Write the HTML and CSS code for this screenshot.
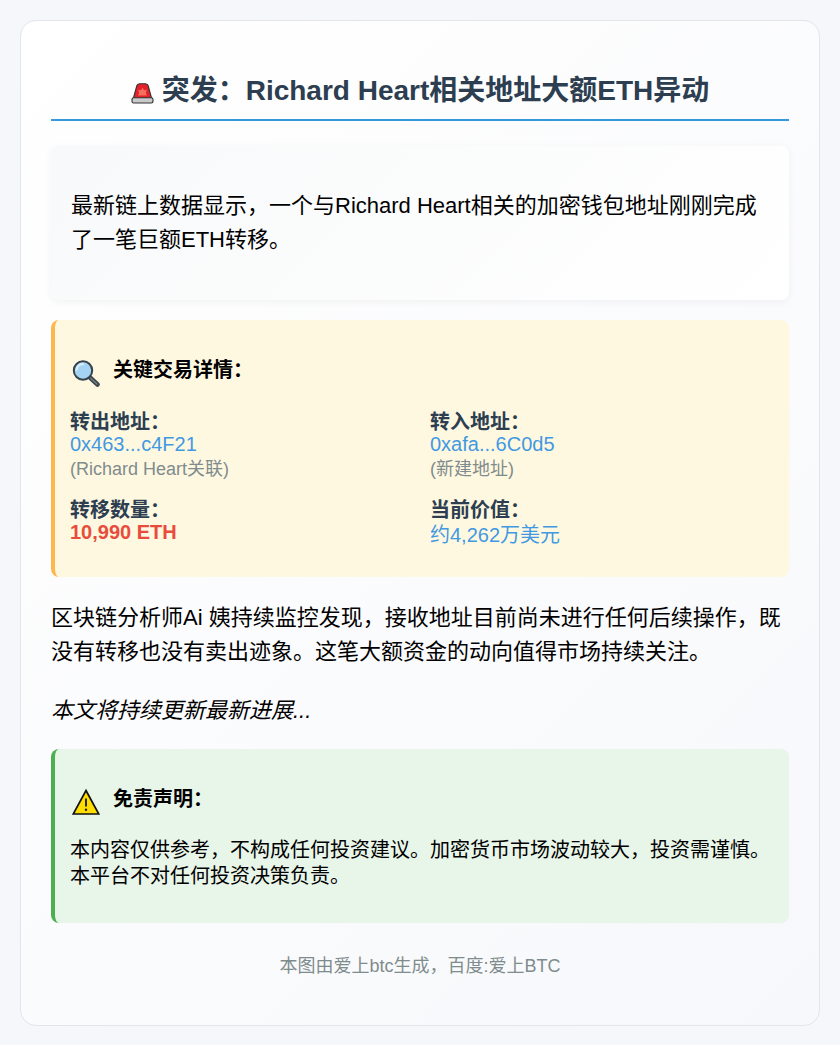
FILE: index.html
```html
<!DOCTYPE html>
<html lang="zh-CN">
<head>
<meta charset="utf-8">
<title>突发：Richard Heart相关地址大额ETH异动</title>
<link rel="stylesheet" href="styles.css">
</head>
<body>
<main class="card">
  <h1 class="title">
    <svg class="icon-siren" viewBox="0 0 24 22" aria-hidden="true">
      <path d="M6 3Q6.500 .8 9 .8h6q2.500 0 3 2.200L21.500 16h-19z" fill="#e3202c" stroke="#333" stroke-width="1.200"/>
      <path d="M12 5l1.600 2.500 2.900-.500-1 3 1 3H7.500l1-3-1-3 2.900.500z" fill="#f4705c"/>
      <rect x="1" y="15.500" width="22" height="5.500" rx="1.800" fill="#c9c9c9" stroke="#333" stroke-width="1.200"/>
    </svg>
    <span>突发：Richard Heart相关地址大额ETH异动</span>
  </h1>

  <section class="lede">
    <p>最新链上数据显示，一个与Richard Heart相关的加密钱包地址刚刚完成了一笔巨额ETH转移。</p>
  </section>

  <section class="panel panel-amber">
    <h2 class="panel-title">
      <svg class="icon" viewBox="0 0 28 28" aria-hidden="true">
        <path d="M18 18.500l7.500 7" stroke="#3a464c" stroke-width="4.500" stroke-linecap="round"/>
        <path d="M18.500 19l6.500 6" stroke="#75828a" stroke-width="1.300" stroke-linecap="round"/>
        <circle cx="11" cy="11.500" r="9.200" fill="#a5d3f3" stroke="#36434a" stroke-width="2"/>
        <path d="M4.500 10.500a6.500 6.500 0 0 1 6.500-5.500" stroke="#d7edfb" stroke-width="2.300" fill="none" stroke-linecap="round"/>
      </svg>
      <span>关键交易详情：</span>
    </h2>
    <div class="grid">
      <div class="item">
        <strong class="label">转出地址：</strong>
        <span class="value">0x463...c4F21</span>
        <span class="note">(Richard Heart关联)</span>
      </div>
      <div class="item">
        <strong class="label">转入地址：</strong>
        <span class="value">0xafa...6C0d5</span>
        <span class="note">(新建地址)</span>
      </div>
      <div class="item">
        <strong class="label">转移数量：</strong>
        <span class="value value-alert">10,990 ETH</span>
      </div>
      <div class="item">
        <strong class="label">当前价值：</strong>
        <span class="value value-cjk">约4,262万美元</span>
      </div>
    </div>
  </section>

  <p class="body-text">区块链分析师Ai 姨持续监控发现，接收地址目前尚未进行任何后续操作，既没有转移也没有卖出迹象。这笔大额资金的动向值得市场持续关注。</p>
  <p class="body-text body-em">本文将持续更新最新进展...</p>

  <section class="panel panel-green">
    <h2 class="panel-title">
      <svg class="icon" viewBox="0 0 28 28" aria-hidden="true">
        <path d="M14 2.500L26.800 26H1.200z" fill="#ffdd00" stroke="#111" stroke-width="1.700"/>
        <path d="M14 10.500v8" stroke="#222" stroke-width="1.900"/>
        <circle cx="14" cy="21.800" r="1.200" fill="#222"/>
      </svg>
      <span>免责声明：</span>
    </h2>
    <p class="panel-text">本内容仅供参考，不构成任何投资建议。加密货币市场波动较大，投资需谨慎。本平台不对任何投资决策负责。</p>
  </section>

  <footer class="foot">本图由爱上btc生成，百度:爱上BTC</footer>
</main>
</body>
</html>
```
FILE: styles.css
```css
* { box-sizing: border-box; }
html, body { margin: 0; }
body {
  background: #f5f7fa;
  padding: 20px;
  color: #000;
  font-family: "Liberation Sans", "Noto Sans CJK SC", sans-serif;
}
.card {
  height: 1006px;
  padding: 30px;
  border: 1px solid #e3e5ea;
  border-radius: 16px;
  background: linear-gradient(135deg, #ffffff 0%, #f7f8fb 100%);
}
.title {
  display: flex;
  justify-content: center;
  align-items: center;
  gap: 8px;
  margin: 0 0 25px;
  height: 70px;
  padding-top: 12px;
  border-bottom: 2px solid #3498db;
  color: #2c3e50;
  font-size: 28px;
  font-weight: 700;
  line-height: 40px;
}
.icon-siren { width: 23px; height: 21px; margin-top: 4px; }
.lede {
  height: 154px;
  padding: 20px;
  margin-bottom: 20px;
  border-radius: 8px;
  background: linear-gradient(135deg, #f8f9fa 0%, #ffffff 100%);
  box-shadow: 0 2px 8px rgba(0,0,0,.05);
}
.lede p { margin: 23px 0 0; font-size: 22px; line-height: 34px; }
.panel {
  padding: 20px 15px;
  border-radius: 8px;
}
.panel-amber {
  height: 257px;
  margin-bottom: 24px;
  background: #fff8e1;
  border-left: 4px solid #ffb74d;
}
.panel-green {
  height: 174px;
  margin-top: 21px;
  background: #e8f5e9;
  border-left: 4px solid #4caf50;
}
.panel-title {
  display: flex;
  align-items: center;
  gap: 13px;
  height: 34px;
  margin: 13px 0 21px;
  font-size: 20px;
  font-weight: 700;
  line-height: 30px;
}
.panel-amber .panel-title { margin-bottom: 24px; }
.icon { width: 28px; height: 28px; flex: none; margin: 6px 0 0 2px; }
.grid {
  display: grid;
  grid-template-columns: 1fr 1fr;
  gap: 16px 16px;
}
.item { display: flex; flex-direction: column; }
.label { color: #2c3e50; font-size: 20px; line-height: 22px; font-weight: 700; }
.value { color: #4299e1; font-size: 20px; line-height: 22px; }
.value-alert { color: #e74c3c; font-weight: 700; }
.value-cjk { padding-top: 3px; }
.note { color: #7f8c8d; font-size: 18px; line-height: 28px; }
.body-text { margin: 0 0 25px; font-size: 22px; line-height: 34px; }
.body-em { font-style: italic; margin-bottom: 0; }
.panel-text { margin: 0; font-size: 20px; line-height: 26px; }
.foot {
  margin-top: 30px;
  text-align: center;
  color: #7f8c8d;
  font-size: 18px;
  line-height: 26px;
}
```
